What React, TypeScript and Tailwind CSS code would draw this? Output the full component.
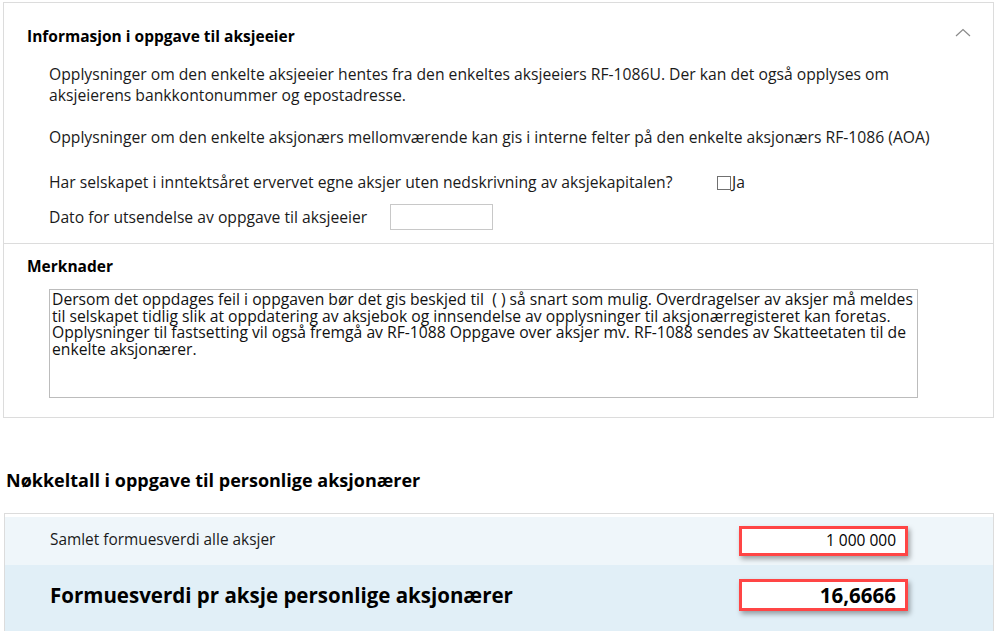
import React from "react";

const font = { fontFamily: '"Open Sans", "Noto Sans", sans-serif' };

function ChevronUp() {
  return (
    <svg width="16" height="9" viewBox="0 0 16 9" className="text-[#8a8a8a]">
      <path d="M1 8 L8 1.5 L15 8" fill="none" stroke="currentColor" strokeWidth="1.2" />
    </svg>
  );
}

export default function App() {
  return (
    <div
      className="w-[998px] h-[631px] overflow-hidden bg-white text-black"
      style={font}
    >
      {/* Informasjon panel */}
      <div className="ml-[3px] mt-[2px] w-[991px] border border-[#dcdcdc]">
        <div className="relative h-[240px] pt-[22px] pl-[23px]">
          <h2 className="text-[15.5px] font-bold leading-[22px]">
            Informasjon i oppgave til aksjeeier
          </h2>
          <div className="absolute right-[22px] top-[25px]">
            <ChevronUp />
          </div>

          <div className="pl-[22px] text-[15.7px] leading-[21px] text-[#1a1a1a]">
            <p className="mt-[17px] whitespace-nowrap">
              Opplysninger om den enkelte aksjeeier hentes fra den enkeltes aksjeeiers RF-1086U. Der kan det også opplyses om
              <br />
              aksjeierens bankkontonummer og epostadresse.
            </p>
            <p className="mt-[21px] whitespace-nowrap">
              Opplysninger om den enkelte aksjonærs mellomværende kan gis i interne felter på den enkelte aksjonærs RF-1086 (AOA)
            </p>
            <div className="mt-[24px] flex items-center">
              <span className="w-[668px] whitespace-nowrap">
                Har selskapet i inntektsåret ervervet egne aksjer uten nedskrivning av aksjekapitalen?
              </span>
              <label className="flex items-center">
                <span className="w-[14px] h-[14px] border border-[#707070] bg-white" />
                <span className="ml-[1px]">Ja</span>
              </label>
            </div>
            <div className="mt-[11px] flex items-center h-[26px]">
              <span className="w-[341px] whitespace-nowrap">Dato for utsendelse av oppgave til aksjeeier</span>
              <input
                className="w-[103px] h-[26px] border border-[#c8c8c8] bg-white outline-none"
                defaultValue=""
              />
            </div>
          </div>
        </div>

        {/* Merknader */}
        <div className="h-[174px] border-t border-[#dcdcdc] pt-[11px] pl-[23px]">
          <h2 className="text-[15.5px] font-bold leading-[22px]">Merknader</h2>
          <div className="mt-[12px] ml-[22px] w-[869px] h-[109px] border border-[#bcbcbc] px-[2px] pt-[1px] text-[15.7px] leading-[16.7px] text-[#111] whitespace-nowrap overflow-hidden">
            Dersom det oppdages feil i oppgaven bør det gis beskjed til&nbsp; ( ) så snart som mulig. Overdragelser av aksjer må meldes
            <br />
            til selskapet tidlig slik at oppdatering av aksjebok og innsendelse av opplysninger til aksjonærregisteret kan foretas.
            <br />
            Opplysninger til fastsetting vil også fremgå av RF-1088 Oppgave over aksjer mv. RF-1088 sendes av Skatteetaten til de
            <br />
            enkelte aksjonærer.
          </div>
        </div>
      </div>

      {/* Nøkkeltall */}
      <h2 className="mt-[50px] ml-[6px] text-[18px] font-bold leading-[24px]">
        Nøkkeltall i oppgave til personlige aksjonærer
      </h2>

      <div className="mt-[21px] ml-[4px] w-[990px] border border-[#dcdcdc] pt-[3px] pb-0">
        <div className="h-[48px] bg-[#eff6fa] flex items-center pl-[45px] pr-[85px]">
          <span className="flex-1 text-[15.4px] text-[#1a1a1a] -mt-[3px]">Samlet formuesverdi alle aksjer</span>
          <div className="w-[169px] h-[30px] border-[3px] border-[#ff4545] bg-white shadow-[2px_3px_5px_rgba(0,0,0,0.35)] flex items-center justify-end pr-[9px] text-[15.5px]">
            1 000 000
          </div>
        </div>
        <div className="h-[70px] bg-[#e1eff7] flex items-start pt-[14px] pl-[45px] pr-[85px]">
          <span className="flex-1 text-[20.5px] font-bold leading-[32px]">
            Formuesverdi pr aksje personlige aksjonærer
          </span>
          <div className="w-[169px] h-[32px] border-[3px] border-[#ff4545] bg-white shadow-[2px_3px_5px_rgba(0,0,0,0.35)] flex items-center justify-end pr-[9px] text-[20.5px] font-bold">
            16,6666
          </div>
        </div>
      </div>
    </div>
  );
}
